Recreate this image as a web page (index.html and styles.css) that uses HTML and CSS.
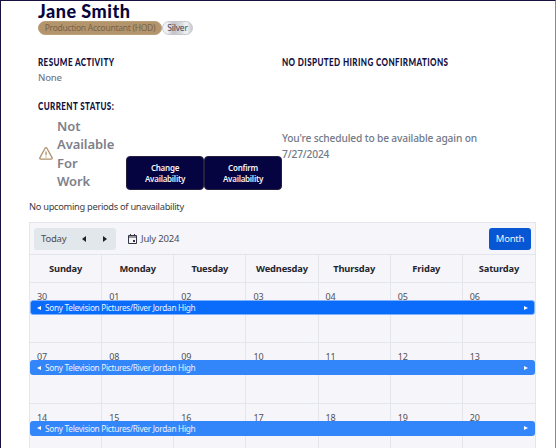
FILE: index.html
```html
<!DOCTYPE html>
<html lang="en">
<head>
<meta charset="utf-8">
<title>Jane Smith</title>
<link rel="stylesheet" href="styles.css">
</head>
<body>
<main class="page">
  <header class="profile">
    <h1 class="name">Jane Smith</h1>
    <div class="badges"><span class="badge role"><span>Production Accountant (HOD)</span></span><span class="badge silver">Silver</span></div>
  </header>
  <section class="summary">
    <div>
      <h2 class="label"><span class="resume">RESUME ACTIVITY</span></h2>
      <p class="none">None</p>
    </div>
    <h2 class="label"><span class="disputed">NO DISPUTED HIRING CONFIRMATIONS</span></h2>
  </section>
  <h2 class="label current"><span class="status-label">CURRENT STATUS:</span></h2>
  <section class="status">
    <svg class="warning" viewBox="0 0 14 13" fill="none" stroke="#b1906a" stroke-width="1.3" stroke-linejoin="round" stroke-linecap="round"><path d="M6.1 1.3a1 1 0 0 1 1.8 0l5.2 9.3a1 1 0 0 1-.9 1.5H1.8a1 1 0 0 1-.9-1.5z"/><path d="M7 4.8v3M7 9.8v.1"/></svg>
    <p class="state">Not<br>Available<br>For<br>Work</p>
    <div class="actions"><button>Change<br>Availability</button><button>Confirm<br>Availability</button></div>
    <p class="again">You're scheduled to be available again on<br>7/27/2024</p>
  </section>
  <p class="upcoming"><span>No upcoming periods of unavailability</span></p>
  <section class="calendar">
    <div class="toolbar">
      <div class="nav"><span class="today">Today</span><i class="tri left"></i><i class="tri right"></i></div>
      <svg class="cal-icon" viewBox="0 0 9 10" fill="none" stroke="#343541"><path d="M.5 1.5h8v8h-8zM.5 3h8M2.5 0v2M6.5 0v2"/><path d="M5 6h2v2H5z" fill="#343541" stroke="none"/></svg>
      <span class="month-name">July 2024</span>
      <button class="month">Month</button>
    </div>
    <div class="days"><span>Sunday</span><span>Monday</span><span>Tuesday</span><span>Wednesday</span><span>Thursday</span><span>Friday</span><span>Saturday</span></div>
    <div class="week">
      <span>30</span><span>01</span><span>02</span><span>03</span><span>04</span><span>05</span><span>06</span>
      <div class="event selected"><i class="tri left"></i><b>Sony Television Pictures/River Jordan High</b><i class="tri right"></i></div>
    </div>
    <div class="week">
      <span>07</span><span>08</span><span>09</span><span>10</span><span>11</span><span>12</span><span>13</span>
      <div class="event"><i class="tri left"></i><b>Sony Television Pictures/River Jordan High</b><i class="tri right"></i></div>
    </div>
    <div class="week">
      <span>14</span><span>15</span><span>16</span><span>17</span><span>18</span><span>19</span><span>20</span>
      <div class="event"><i class="tri left"></i><b>Sony Television Pictures/River Jordan High</b><i class="tri right"></i></div>
    </div>
  </section>
</main>
</body>
</html>
```
FILE: styles.css
```css
* { box-sizing: border-box; }
body, h1, h2, p { margin: 0; }
body { background: #fff; font-family: "Noto Sans", "Open Sans", sans-serif; overflow: hidden; }
button { font-family: inherit; padding: 0; border: 0; }
.page { height: 448px; overflow: hidden; border: 1px solid #17123f; border-right-color: #8a8a94; border-bottom: 0; padding-left: 28px; }
.profile { padding: 0 0 0 9px; }
.name { font: 900 18px/20px Lato, sans-serif; color: #07053d; letter-spacing: .5px; }
.badges { display: flex; height: 15px; margin-top: 0; }
.badge { height: 14px; border-radius: 7px; font-size: 9px; line-height: 14px; text-align: center; white-space: nowrap; }
.role { width: 124px; background: #b3946b; color: #77634e; font-size: 8.5px; letter-spacing: -.27px; border: 1px solid #bba07c; line-height: 12px; }
.silver { width: 31px; color: #45454f; border: 1px solid #c6c9d0; line-height: 12px; background: linear-gradient(90deg, #f2f2f4 15%, #c1c3c8 35%, #d9dbe0 65%, #f5f5f5 80%, #c7cad0); font-size: 8.5px; letter-spacing: -.2px; }
.summary { display: grid; grid-template-columns: 244px 1fr; padding: 18px 0 0 9px; height: 62px; }
.label { font: 900 11px/16px Lato, sans-serif; color: #12103f; white-space: nowrap; }
.label span { display: inline-block; transform-origin: left; transform: scale(.73, 1.06); letter-spacing: .55px; }
.none { font-size: 9.5px; line-height: 15px; font-weight: 500; color: #747b89; letter-spacing: -.2px; }
.current { padding-left: 9px; height: 16px; }
.status { display: flex; height: 79px; padding-left: 10px; margin-top: 3px; }
.warning { width: 14px; height: 13px; margin-top: 30px; }
.state { margin-left: 4px; width: 69px; font-size: 13px; line-height: 18.4px; font-weight: 600; color: #7d808a; letter-spacing: -.07px; }
.actions { display: flex; margin-top: 39px; height: 34px; width: 156px; }
.actions button { width: 78px; border-radius: 4px; border: 1px solid #24203d; background: #050340; color: #f2f2f7; font-size: 8px; font-weight: 600; line-height: 11.5px; letter-spacing: -.25px; }
.again { font-size: 10.2px; line-height: 16px; font-weight: 500; color: #727987; margin-top: 13px; white-space: nowrap; letter-spacing: -.15px; }
.upcoming { font-size: 9.3px; line-height: 14px; color: #3d3d43; height: 22px; margin-top: 4px; white-space: nowrap; letter-spacing: -.3px; }
.calendar { width: 507px; border: 1px solid #e4e6eb; border-bottom: 0; background: #f5f5fa; }
.toolbar { height: 31px; display: flex; align-items: center; padding: 0 4px; font-size: 9.5px; color: #4d4d54; letter-spacing: -.2px; }
.nav { width: 82px; height: 22px; border-radius: 3px; background: #e2e7eb; display: flex; align-items: center; padding-left: 7px; }
.today { width: 41px; }
.tri { width: 0; height: 0; flex: none; border: 2.5px solid transparent; }
.left { border-right: 4px solid #1e2028; border-left: 0; }
.right { border-left: 4px solid #1e2028; border-right: 0; }
.nav .tri { border-top-width: 3px; border-bottom-width: 3px; }
.nav .right { margin-left: 17px; }
.cal-icon { width: 9px; height: 10px; margin: 0 4px 0 12px; }
.month { margin-left: auto; width: 42px; height: 22px; border-radius: 3px; background: #0757d5; color: #edf3ff; font-size: 9.5px; letter-spacing: -.2px; }
.days, .week { display: grid; grid-template-columns: repeat(7, minmax(0, 1fr)); position: relative; }
.days { height: 28px; border-top: 1px solid #e2e5e9; }
.days span { text-align: center; font-size: 9.3px; line-height: 27px; font-weight: 700; color: #25262d; letter-spacing: -.15px; }
.days span, .week > span { border-right: 1px solid #e3e6eb; }
.days span:nth-child(7), .week > span:nth-child(7) { border-right: 0; }
.week { height: 60.3px; border-top: 1px solid #e3e6eb; }
.week > span { padding: 7px 0 0 7px; font-size: 9px; line-height: 14px; color: #515157; letter-spacing: -.15px; }
.event { position: absolute; left: 0; right: 0; top: 17px; height: 15px; border-radius: 3px; background: #3385fa; display: flex; align-items: center; color: #e9f2ff; font-size: 8.3px; padding: 0 7px; }
.selected { background: #0b6cfb; border: 1px solid #7fb2fb; padding: 0 6px; }
.event b { font-weight: 400; margin-left: 4px; white-space: nowrap; letter-spacing: -.31px; }
.event .left { border-right-color: #fff; }
.event .right { border-left-color: #fff; margin-left: auto; }
```
